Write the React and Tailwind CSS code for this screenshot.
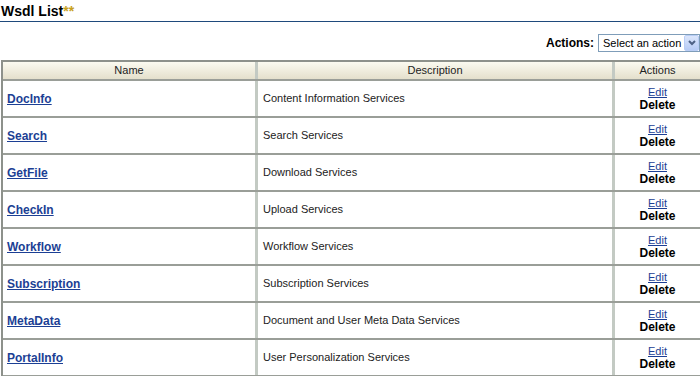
const rows = [
  ["DocInfo", "Content Information Services"],
  ["Search", "Search Services"],
  ["GetFile", "Download Services"],
  ["CheckIn", "Upload Services"],
  ["Workflow", "Workflow Services"],
  ["Subscription", "Subscription Services"],
  ["MetaData", "Document and User Meta Data Services"],
  ["PortalInfo", "User Personalization Services"],
];

const App = () => {
  return (
    <div className="w-[700px] h-[376px] overflow-hidden bg-white font-['Liberation_Sans',sans-serif] text-black">
      <div className="h-[22px] border-b border-[#1f4a7c] flex items-end pb-[3px]">
        <span className="text-[14px] font-bold leading-none pl-[1px]">
          Wsdl List<span className="text-[#c8a020]">**</span>
        </span>
      </div>

      <div className="flex justify-end items-center mt-[12px] h-[18px]">
        <span className="text-[12px] font-bold mr-[4px]">Actions:</span>
        <div className="w-[102px] h-[18px] border border-[#7f9db9] flex items-center bg-white overflow-hidden">
          <span className="text-[11px] pl-[4px] flex-1 whitespace-nowrap overflow-hidden">Select an action</span>
          <div className="w-[15px] h-[16px] shrink-0 bg-gradient-to-b from-[#dce6fb] to-[#b6cbf5] border border-[#b9cdf5] rounded-[2px] flex items-center justify-center">
            <svg width="8" height="6" viewBox="0 0 8 6">
              <path d="M1 1 L4 4 L7 1" stroke="#4d6185" strokeWidth="2" fill="none" />
            </svg>
          </div>
        </div>
      </div>

      <div className="ml-[1px] mt-[8px] w-[699px] border-l-2 border-t-2 border-[#8d918b]">
        <div className="flex h-[19px] border-b-2 border-[#9a9e98] bg-gradient-to-b from-[#fbfaf0] to-[#e4e0cc] text-[11px] text-[#222]">
          <div className="w-[255px] border-r-[3px] border-[#c3cac3] flex items-center justify-center">Name</div>
          <div className="w-[357px] border-r-[3px] border-[#c3cac3] flex items-center justify-center">Description</div>
          <div className="flex-1 flex items-center justify-center">Actions</div>
        </div>
        {rows.map(([name, desc]) => (
          <div key={name} className="flex h-[37px] border-b-2 border-[#9a9e98]">
            <div className="w-[255px] border-r-[3px] border-[#c3cac3] flex items-center pl-[4px]">
              <a href="#" className="text-[12px] font-bold text-[#1c3f94] underline">{name}</a>
            </div>
            <div className="w-[357px] border-r-[3px] border-[#c3cac3] flex items-center pl-[5px] text-[11px] text-[#222]">
              {desc}
            </div>
            <div className="flex-1 flex flex-col items-center justify-center leading-[13px]">
              <a href="#" className="text-[11px] text-[#1c3f94] underline">Edit</a>
              <span className="text-[12px] font-bold">Delete</span>
            </div>
          </div>
        ))}
      </div>
    </div>
  );
};

export default App;
